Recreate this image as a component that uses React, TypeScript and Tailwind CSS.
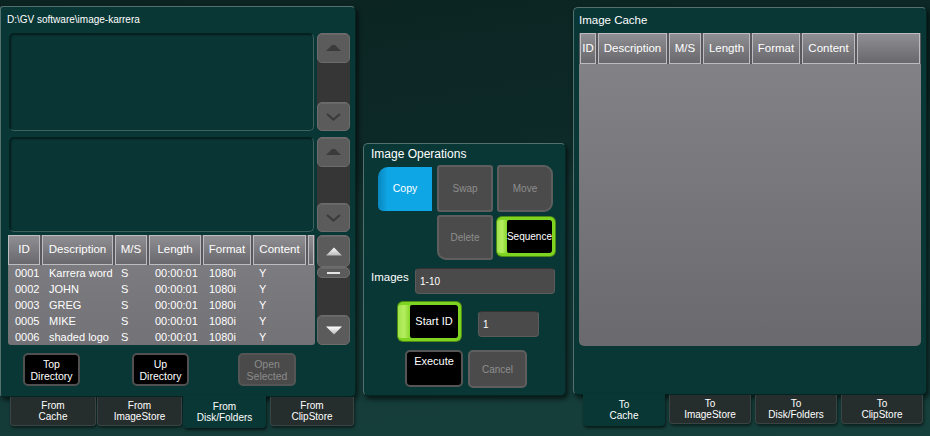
import React from 'react';

const panel =
  'bg-[#093735] border-t border-l border-[#52716f] border-r border-b border-r-[#062422] border-b-[#062422] shadow-[2px_3px_5px_rgba(0,0,0,0.65)]';

function UpArrow({ light }: { light?: boolean }) {
  if (light)
    return (
      <svg width="16" height="9" viewBox="0 0 16 9">
        <defs>
          <linearGradient id="ua" x1="0" y1="0" x2="0" y2="1">
            <stop offset="0" stopColor="#ffffff" />
            <stop offset="1" stopColor="#b9b9b9" />
          </linearGradient>
        </defs>
        <polygon points="0,8.5 8,0.5 16,8.5" fill="url(#ua)" />
      </svg>
    );
  return (
    <svg width="15" height="6" viewBox="0 0 15 6">
      <polygon points="0,6 6,0 9,0 15,6" fill="#3b3b3b" />
    </svg>
  );
}

function DownArrow({ light }: { light?: boolean }) {
  if (light)
    return (
      <svg width="16" height="9" viewBox="0 0 16 9">
        <defs>
          <linearGradient id="da" x1="0" y1="0" x2="0" y2="1">
            <stop offset="0" stopColor="#ffffff" />
            <stop offset="1" stopColor="#b9b9b9" />
          </linearGradient>
        </defs>
        <polygon points="0,0.5 16,0.5 8,8.5" fill="url(#da)" />
      </svg>
    );
  return (
    <svg width="15" height="8" viewBox="0 0 15 8">
      <polyline points="1,1 7.5,6.5 14,1" fill="none" stroke="#3b3b3b" strokeWidth="2.2" />
    </svg>
  );
}

function SBtn({ h, children }: { h: string; children?: React.ReactNode }) {
  return (
    <div
      className={`${h} w-full flex items-center justify-center rounded-[5px] bg-[#5b5b5b] border border-[#6c6c6c] shadow-[inset_0_1px_0_rgba(255,255,255,0.08)]`}
    >
      {children}
    </div>
  );
}

function ListBox({ h }: { h: string }) {
  return (
    <div className={`${h} flex pl-[8px]`}>
      <div className="w-[305px] h-full rounded-[5px] bg-[#093634] border border-[#3f625f] border-t-[#05201f] border-l-[#05201f] shadow-[inset_1px_1px_2px_rgba(0,0,0,0.5)]" />
      <div className="ml-[3px] w-[33px] h-full flex flex-col bg-[#363636] rounded-[5px]">
        <SBtn h="h-[30px]">
          <UpArrow />
        </SBtn>
        <div className="flex-1" />
        <SBtn h="h-[29px]">
          <DownArrow />
        </SBtn>
      </div>
    </div>
  );
}

const hcell =
  'h-full flex items-center justify-center border border-[#bdbcc0] bg-[linear-gradient(#8f8e92,#69686c)] text-white text-[11.5px]';

const rows = [
  ['0001', 'Karrera word'],
  ['0002', 'JOHN'],
  ['0003', 'GREG'],
  ['0005', 'MIKE'],
  ['0006', 'shaded logo'],
];

function NavBtn({ a, b, dim }: { a: string; b: string; dim?: boolean }) {
  return (
    <div
      className={`h-[33px] flex flex-col items-center justify-center rounded-[5px] border-2 text-[10.5px] leading-[12px] ${
        dim ? 'bg-[#4a4a4a] border-[#555555] text-[#8a8a8a] w-[58px]' : 'bg-black border-[#505050] text-white w-[57px]'
      }`}
    >
      <span>{a}</span>
      <span>{b}</span>
    </div>
  );
}

function Tab({ a, b, w, active }: { a: string; b: string; w: string; active?: boolean }) {
  return (
    <div
      className={`${w} flex flex-col items-center justify-center text-white text-[10px] leading-[11px] rounded-b-[4px] ${
        active
          ? 'h-[33px] -mt-[2px] bg-[#093735] shadow-[1px_2px_3px_rgba(0,0,0,0.6)]'
          : 'h-[29px] bg-[#262e2d] border border-[#3a4443] border-t-0 shadow-[1px_2px_3px_rgba(0,0,0,0.5)]'
      }`}
    >
      <span>{a}</span>
      <span>{b}</span>
    </div>
  );
}

function GreenBtn({ w, h, label, text }: { w: string; h: string; label: string; text: string }) {
  return (
    <div
      className={`${w} ${h} flex rounded-[5px] bg-[#7fd321] border-[3px] border-[#7fd321] border-l-0 overflow-hidden shadow-[0_0_0_1px_#4e8a14]`}
    >
      <div className="w-[12px] h-full bg-[linear-gradient(90deg,#9fe24a,#b6ee62_50%,#86d72a)]" />
      <div className={`flex-1 bg-black rounded-[2px] flex items-center justify-center text-white ${text}`}>{label}</div>
    </div>
  );
}

const gray = 'bg-[#4b4b4b] border-2 border-[#5e5e5e] text-[#8e8e8e] text-[10px] flex items-center justify-center';

export default function App() {
  return (
    <div className="w-[930px] h-[436px] overflow-hidden flex font-['Liberation_Sans',Arial,sans-serif] bg-[linear-gradient(172deg,#0b2321_0%,#0d2a28_38%,#133634_46%,#16403c_100%)]">
      {/* left column */}
      <div className="w-[356px] flex flex-col pt-[6px]">
        <div className={`${panel} h-[391px] rounded-r-[5px] rounded-l-[3px] flex flex-col`}>
          <div className="h-[26px] pl-[6px] pt-[6px] text-[10px] leading-[13px] text-white">
            D:\GV software\image-karrera
          </div>
          <ListBox h="h-[98px]" />
          <div className="h-[6px]" />
          <ListBox h="h-[95px]" />
          <div className="h-[3px]" />
          <div className="h-[110px] flex pl-[7px]">
            <div className="w-[307px] h-full flex flex-col bg-[linear-gradient(#7f7e82,#737276)] rounded-b-[3px] overflow-hidden">
              <div className="h-[31px] flex gap-[2px] bg-[#59585c]">
                <div className={`${hcell} w-[32px]`}>ID</div>
                <div className={`${hcell} w-[71px]`}>Description</div>
                <div className={`${hcell} w-[32px]`}>M/S</div>
                <div className={`${hcell} w-[52px]`}>Length</div>
                <div className={`${hcell} w-[48px]`}>Format</div>
                <div className={`${hcell} w-[53px]`}>Content</div>
                <div className={`${hcell} w-[6px]`} />
              </div>
              <div className="flex flex-col text-white text-[11px]">
                {rows.map((r) => (
                  <div key={r[0]} className="h-[16px] flex items-center pl-[7px] leading-[16px]">
                    <span className="w-[34px]">{r[0]}</span>
                    <span className="w-[72px]">{r[1]}</span>
                    <span className="w-[34px]">S</span>
                    <span className="w-[54px]">00:00:01</span>
                    <span className="w-[50px]">1080i</span>
                    <span>Y</span>
                  </div>
                ))}
              </div>
            </div>
            <div className="ml-[2px] w-[33px] h-full flex flex-col bg-[#363636] rounded-[5px]">
              <SBtn h="h-[32px]">
                <UpArrow light />
              </SBtn>
              <SBtn h="h-[11px]">
                <div className="w-[13px] h-[2px] bg-[#e6e6e6]" />
              </SBtn>
              <div className="flex-1" />
              <SBtn h="h-[30px]">
                <DownArrow light />
              </SBtn>
            </div>
          </div>
          <div className="h-[8px]" />
          <div className="h-[33px] flex pl-[22px]">
            <NavBtn a="Top" b="Directory" />
            <div className="ml-[52px]">
              <NavBtn a="Up" b="Directory" />
            </div>
            <div className="ml-[49px]">
              <NavBtn a="Open" b="Selected" dim />
            </div>
          </div>
        </div>
        <div className="relative z-10 flex items-start pl-[10px] gap-[1px]">
          <Tab a="From" b="Cache" w="w-[86px]" />
          <Tab a="From" b="ImageStore" w="w-[85px]" />
          <Tab a="From" b="Disk/Folders" w="w-[83px]" active />
          <div className="w-[2px]" />
          <Tab a="From" b="ClipStore" w="w-[84px]" />
        </div>
      </div>

      {/* middle column */}
      <div className="ml-[7px] mt-[143px] w-[203px] h-[253px]">
        <div className={`${panel} h-full rounded-[5px] flex flex-col`}>
          <div className="h-[21px] pl-[7px] pt-[3px] text-[12px] leading-[14px] text-white">Image Operations</div>
          <div className="pl-[14px] grid grid-cols-[55px_56px_58px] grid-rows-[47px_45px] gap-x-[4px] gap-y-[3px]">
            <div className="mt-[2px] h-[44px] w-[54px] rounded-tl-[10px] rounded-bl-[5px] bg-[linear-gradient(90deg,#0a86bd,#0ea6e5_18%,#0ea6e5)] text-white text-[10.5px] flex items-center justify-center">
              Copy
            </div>
            <div className={`${gray} h-[47px] w-[56px] rounded-[3px]`}>Swap</div>
            <div className={`${gray} h-[47px] w-[56px] rounded-l-[3px] rounded-r-[9px]`}>Move</div>
            <div />
            <div className={`${gray} h-[45px] w-[56px] rounded-t-[3px] rounded-bl-[9px] rounded-br-[3px]`}>Delete</div>
            <div className="mt-[2px]">
              <GreenBtn w="w-[58px]" h="h-[39px]" label="Sequence" text="text-[10px]" />
            </div>
          </div>
          <div className="mt-[8px] h-[26px] flex">
            <div className="pl-[7px] w-[51px] text-white text-[11.5px] leading-[14px] pt-[2px]">Images</div>
            <div className="w-[140px] h-full rounded-[4px] bg-[#4a4a4a] border border-[#5b5b5b] border-t-[#333333] text-white text-[10px] flex items-center pl-[4px]">
              1-10
            </div>
          </div>
          <div className="mt-[8px] h-[39px] flex">
            <div className="ml-[34px]">
              <GreenBtn w="w-[63px]" h="h-[39px]" label="Start ID" text="text-[11px]" />
            </div>
            <div className="ml-[17px] mt-[9px] w-[61px] h-[26px] rounded-[4px] bg-[#4a4a4a] border border-[#5b5b5b] border-t-[#333333] text-white text-[10px] flex items-center pl-[4px]">
              1
            </div>
          </div>
          <div className="mt-[9px] h-[38px] flex">
            <div className="ml-[41px] w-[58px] h-[37px] rounded-[5px] bg-black border-2 border-[#555555] text-white text-[11px] flex justify-center pt-[2px] leading-[14px]">
              Execute
            </div>
            <div className={`ml-[5px] w-[59px] h-[38px] rounded-[5px] ${gray} text-[10.5px]`}>Cancel</div>
          </div>
        </div>
      </div>

      {/* right column */}
      <div className="ml-[7px] w-[354px] flex flex-col pt-[7px]">
        <div className={`${panel} h-[388px] rounded-[5px] flex flex-col`}>
          <div className="h-[25px] pl-[5px] pt-[5px] text-[11.5px] leading-[14px] text-white">Image Cache</div>
          <div className="ml-[5px] w-[342px] h-[313px] flex flex-col rounded-b-[5px] overflow-hidden bg-[linear-gradient(#858489,#6a696e)]">
            <div className="h-[31px] flex gap-[2px] pl-[1px] bg-[#59585c]">
              <div className={`${hcell} w-[16px]`}>ID</div>
              <div className={`${hcell} w-[69px]`}>Description</div>
              <div className={`${hcell} w-[32px]`}>M/S</div>
              <div className={`${hcell} w-[47px]`}>Length</div>
              <div className={`${hcell} w-[48px]`}>Format</div>
              <div className={`${hcell} w-[53px]`}>Content</div>
              <div className={`${hcell} w-[63px]`} />
            </div>
          </div>
        </div>
        <div className="relative z-10 flex items-start pl-[10px] gap-[4px]">
          <Tab a="To" b="Cache" w="w-[82px]" active />
          <Tab a="To" b="ImageStore" w="w-[82px]" />
          <Tab a="To" b="Disk/Folders" w="w-[82px]" />
          <Tab a="To" b="ClipStore" w="w-[82px]" />
        </div>
      </div>
    </div>
  );
}
